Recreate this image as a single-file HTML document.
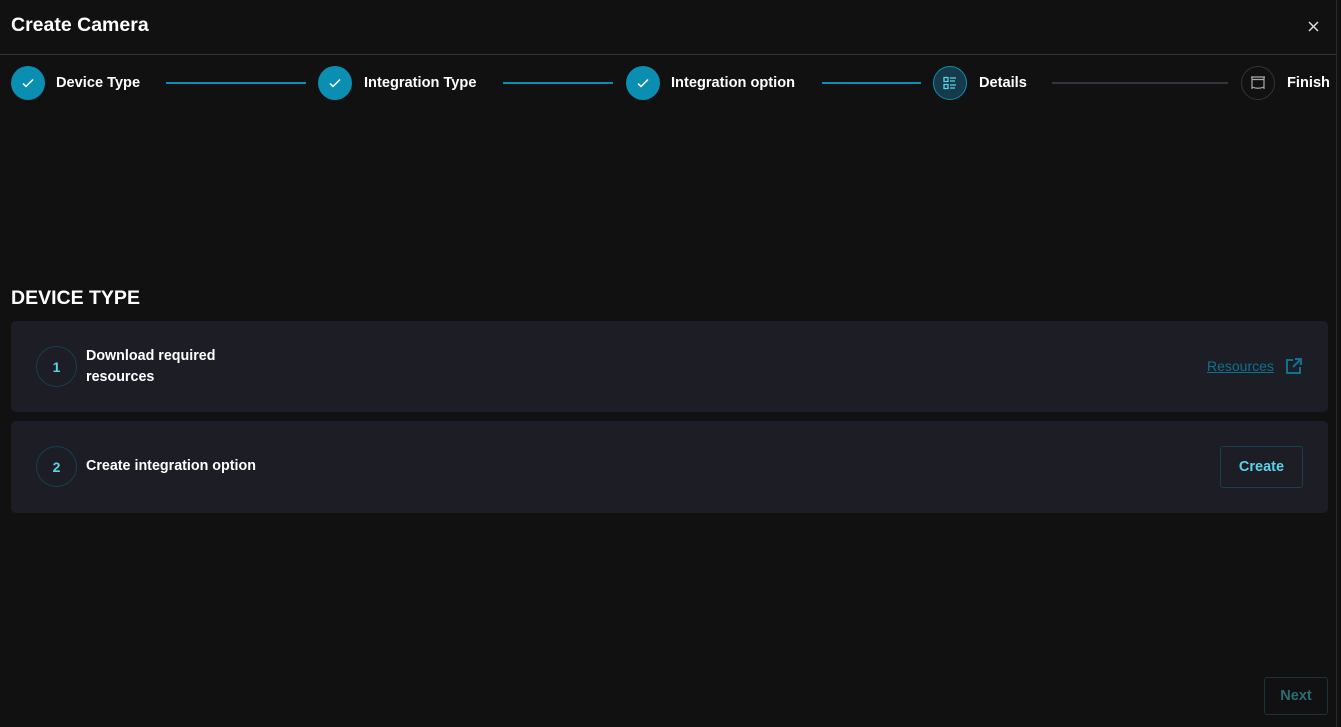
<!DOCTYPE html>
<html><head><style>
*{box-sizing:border-box;margin:0;padding:0}
body{width:1341px;height:727px;background:#111112;font-family:"Liberation Sans",sans-serif;color:#fff;position:relative;overflow:hidden}
.a{position:absolute}
.t{font-weight:bold;font-size:14.6px;white-space:nowrap}
.c{width:34px;height:34px;border-radius:50%;background:#0a8fb3;display:flex;align-items:center;justify-content:center}
.ln{height:2px;background:#0a8fb3;top:82px}
.card{left:11px;width:1317px;background:#1c1d25;border-radius:5px}
.num{width:41px;height:41px;border-radius:50%;border:1px solid #17404d;display:flex;align-items:center;justify-content:center;font-weight:bold;font-size:14px;color:#5ad3ea}
</style></head><body>
<div class="a" style="left:1336px;top:0;width:5px;height:727px;border-left:1px solid #2a2b30;background:#111"></div>
<div class="a t" style="left:11px;top:14px;font-size:19.5px">Create Camera</div>
<svg class="a" style="left:1308px;top:21px" width="11" height="11" viewBox="0 0 11 11"><path d="M1 1l9 9M10 1l-9 9" stroke="#ddd" stroke-width="1.5"/></svg>
<div class="a" style="left:0;top:54px;width:1336px;height:1px;background:#34353d"></div>

<div class="a c" style="left:11px;top:66px"><svg width="14" height="14" viewBox="0 0 14 14"><path d="M2 7.5l3 3 7-7" stroke="#fff" stroke-width="1.5" fill="none"/></svg></div>
<div class="a t" style="left:56px;top:75px">Device Type</div>
<div class="a ln" style="left:166px;width:140px"></div>
<div class="a c" style="left:318px;top:66px"><svg width="14" height="14" viewBox="0 0 14 14"><path d="M2 7.5l3 3 7-7" stroke="#fff" stroke-width="1.5" fill="none"/></svg></div>
<div class="a t" style="left:364px;top:75px">Integration Type</div>
<div class="a ln" style="left:503px;width:110px"></div>
<div class="a c" style="left:626px;top:66px"><svg width="14" height="14" viewBox="0 0 14 14"><path d="M2 7.5l3 3 7-7" stroke="#fff" stroke-width="1.5" fill="none"/></svg></div>
<div class="a t" style="left:671px;top:75px">Integration option</div>
<div class="a ln" style="left:822px;width:99px"></div>
<div class="a c" style="left:933px;top:66px;background:#163a4a;border:1px solid #0a8fb3"><svg width="16" height="16" viewBox="0 0 16 16" fill="none" stroke="#5ad3ea" stroke-width="1.3"><rect x="2" y="2.5" width="4" height="4"/><rect x="2" y="9.5" width="4" height="4"/><path d="M8 3h6M8 6h5M8 10h6M8 13h5"/></svg></div>
<div class="a t" style="left:979px;top:75px">Details</div>
<div class="a ln" style="left:1052px;width:176px;background:#33343c"></div>
<div class="a c" style="left:1241px;top:66px;background:#111;border:1px solid #33343c"><svg width="18" height="18" viewBox="0 0 18 18" fill="none" stroke="#aaa" stroke-width="1.2"><path d="M2 3h14M3 3v12M15 3v12M3 5.5h12M3 13q6 2.5 12 0"/></svg></div>
<div class="a t" style="left:1287px;top:75px">Finish</div>

<div class="a t" style="left:11px;top:287px;font-size:19.5px">DEVICE TYPE</div>

<div class="a card" style="top:321px;height:91px"></div>
<div class="a num" style="left:36px;top:346px">1</div>
<div class="a t" style="left:86px;top:346px;font-size:14.3px;line-height:21px">Download required<br>resources</div>
<div class="a" style="left:1207px;top:358px;font-size:14px;color:#0e7290;text-decoration:underline">Resources</div>
<svg class="a" style="left:1285px;top:357px" width="18" height="18" viewBox="0 0 18 18" fill="none" stroke="#0e7290" stroke-width="2"><path d="M8 3H2v13h13v-6M10 2h6v6M16 2L8 10"/></svg>

<div class="a card" style="top:421px;height:92px"></div>
<div class="a num" style="left:36px;top:446px">2</div>
<div class="a t" style="left:86px;top:458px;font-size:14.3px">Create integration option</div>
<div class="a" style="left:1220px;top:446px;width:83px;height:42px;border:1px solid #17404d;border-radius:3px;display:flex;align-items:center;justify-content:center;font-weight:bold;font-size:14.5px;color:#5ad3ea">Create</div>

<div class="a" style="left:1264px;top:677px;width:64px;height:38px;border:1px solid #17343d;border-radius:3px;display:flex;align-items:center;justify-content:center;font-weight:bold;font-size:14.5px;color:#2f6b72">Next</div>
</body></html>
